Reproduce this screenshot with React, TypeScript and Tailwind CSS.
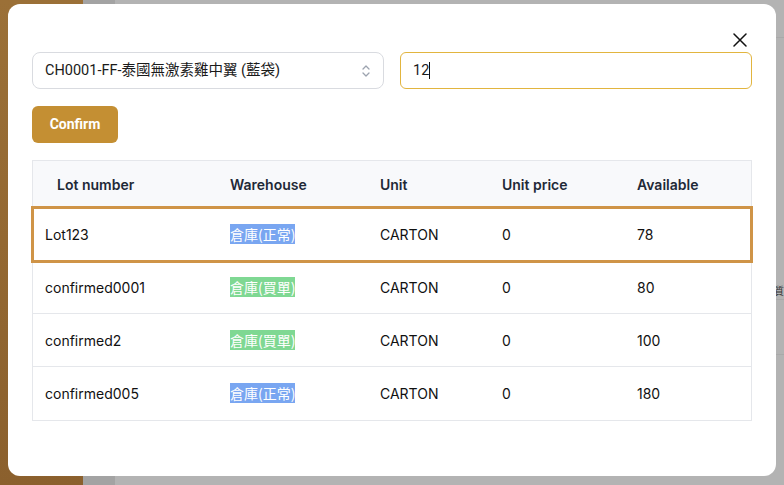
import React from 'react';

type Row = { lot: string; warehouse: string; kind: 'normal' | 'bill'; unit: string; price: string; available: string };

const rows: Row[] = [
  { lot: 'Lot123', warehouse: '倉庫(正常)', kind: 'normal', unit: 'CARTON', price: '0', available: '78' },
  { lot: 'confirmed0001', warehouse: '倉庫(買單)', kind: 'bill', unit: 'CARTON', price: '0', available: '80' },
  { lot: 'confirmed2', warehouse: '倉庫(買單)', kind: 'bill', unit: 'CARTON', price: '0', available: '100' },
  { lot: 'confirmed005', warehouse: '倉庫(正常)', kind: 'normal', unit: 'CARTON', price: '0', available: '180' },
];

const cols = 'grid grid-cols-[185px_150px_122px_135px_1fr]';

function Backdrop() {
  return (
    <div className="flex h-[485px] w-[784px]">
      <div className="w-[83px] bg-gradient-to-b from-[#9b7037] to-[#8b602d]" />
      <div className="w-[32px] bg-[#a3a3a3]" />
      <div className="flex-1 bg-[#b3b3b3] flex flex-col">
        <div className="h-[38px] border-b border-[#a9a9a9]" />
        <div className="h-[262px] border-b border-[#a9a9a9] flex justify-end items-end pb-[2px] text-[10px] leading-[12px] text-[#333] font-['Noto_Sans_CJK_TC',sans-serif]">
          <span>質</span>
        </div>
        <div className="h-[55px] border-b border-[#a9a9a9]" />
        <div className="flex-1" />
      </div>
    </div>
  );
}

function Badge({ kind, children }: { kind: Row['kind']; children: React.ReactNode }) {
  return (
    <span
      className={
        'text-white text-[14px] leading-[17px] font-["Noto_Sans_CJK_TC",sans-serif] ' +
        (kind === 'normal' ? 'bg-[#79a6f1]' : 'bg-[#7fd893]')
      }
    >
      {children}
    </span>
  );
}

export default function App() {
  return (
    <div className="relative h-[485px] w-[784px] overflow-hidden">
      <Backdrop />
      <div className="absolute left-[8px] top-[4px] w-[768px] h-[472px] bg-white rounded-[12px] px-6 font-['Inter',sans-serif]">
        <div className="h-[48px] flex justify-end items-end pb-[5px] pr-[5px]">
          <svg width="14" height="14" viewBox="0 0 14 14" className="text-[#111]">
            <path d="M1 1L13 13M13 1L1 13" stroke="currentColor" strokeWidth="1.5" strokeLinecap="round" />
          </svg>
        </div>
        <div className="grid grid-cols-2 gap-4">
          <div className="h-[37px] flex items-center justify-between rounded-[8px] border border-[#d9dbe0] pl-3 pr-[12px] font-['Roboto','Noto_Sans_CJK_TC',sans-serif] text-[14.5px] text-[#1a1a1a]">
            <span>CH0001-FF-泰國無激素雞中翼 (藍袋)</span>
            <svg width="10" height="16" viewBox="0 0 10 16" className="text-[#9ca3af]">
              <path d="M2 6L5 3L8 6M2 10L5 13L8 10" fill="none" stroke="currentColor" strokeWidth="1.3" strokeLinecap="round" strokeLinejoin="round" />
            </svg>
          </div>
          <div className="h-[37px] flex items-center rounded-[6px] border border-[#e2b53f] pl-3 font-['Roboto',sans-serif] text-[14.5px] text-[#1a1a1a]">
            <span>12</span>
            <span className="w-px h-[17px] bg-[#111]" />
          </div>
        </div>
        <button className="mt-[17px] h-[37px] w-[86px] rounded-[6px] bg-[#c48f33] text-white text-[14px] font-bold font-['Roboto',sans-serif]">
          Confirm
        </button>
        <div className="mt-[17px] border border-[#e5e7eb] text-[14px]">
          <div className={cols + ' h-[47px] items-center bg-[#f8f9fb] border-b border-[#e5e7eb] font-semibold text-[#1f2937]'}>
            <div className="pl-[24px]">Lot number</div>
            <div className="pl-3">Warehouse</div>
            <div className="pl-3">Unit</div>
            <div className="pl-3">Unit price</div>
            <div className="pl-3">Available</div>
          </div>
          {rows.map((r, i) => (
            <div
              key={r.lot}
              className={
                cols +
                ' h-[53px] items-center text-[#111] ' +
                (i < rows.length - 1 ? 'border-b border-[#e5e7eb] ' : '') +
                (i === 0 ? 'outline-[3px] outline-solid outline-[#cf9447] -outline-offset-1 relative' : '')
              }
            >
              <div className="pl-3">{r.lot}</div>
              <div className="pl-3">
                <Badge kind={r.kind}>{r.warehouse}</Badge>
              </div>
              <div className="pl-3">{r.unit}</div>
              <div className="pl-3">{r.price}</div>
              <div className="pl-3">{r.available}</div>
            </div>
          ))}
        </div>
      </div>
    </div>
  );
}
